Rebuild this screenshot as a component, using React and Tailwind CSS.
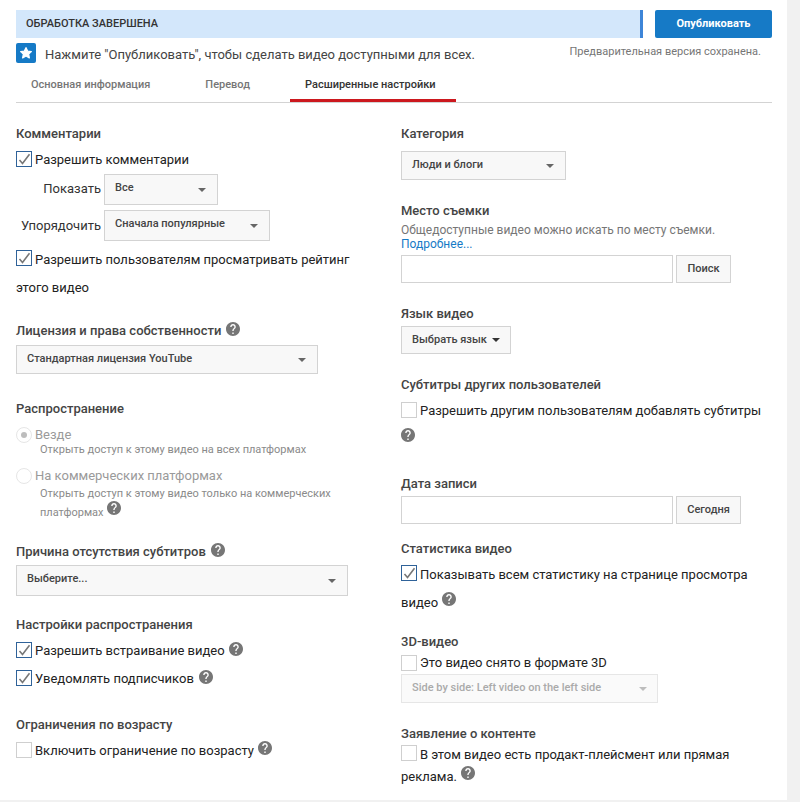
import React from "react";

function Help({ className = "" }) {
  return (
    <svg viewBox="2 2 20 20" className={"inline-block w-[14px] h-[14px] shrink-0 " + className}>
      <path fill="#767676" d="M12 2C6.48 2 2 6.48 2 12s4.48 10 10 10 10-4.48 10-10S17.52 2 12 2zm1 17h-2v-2h2v2zm2.07-7.75l-.9.92C13.45 12.9 13 13.5 13 15h-2v-.5c0-1.1.45-2.1 1.17-2.83l1.24-1.26c.37-.36.59-.86.59-1.41 0-1.1-.9-2-2-2s-2 .9-2 2H8c0-2.21 1.79-4 4-4s4 1.79 4 4c0 .88-.36 1.68-.93 2.25z" />
    </svg>
  );
}

function Box({ checked, className = "" }) {
  return (
    <span className={"inline-block align-[-2px] w-[16px] h-[16px] border bg-white relative shrink-0 mr-[3px] " + (checked ? "border-[#2f6299] " : "border-[#cfcfcf] ") + className}>
      {checked && (
        <svg viewBox="0 0 16 16" className="absolute -left-[1px] -top-[1px] w-[16px] h-[16px]">
          <path d="M3.5 9 L6.5 12.5 L13.5 3.2" fill="none" stroke="#777777" strokeWidth="1.6" />
        </svg>
      )}
    </span>
  );
}

function Arrow({ light, dark }) {
  return <span className={"w-0 h-0 border-l-[4px] border-r-[4px] border-t-[4px] border-l-transparent border-r-transparent " + (light ? "border-t-[#bdbdbd]" : dark ? "border-t-[#333333]" : "border-t-[#666666]")} />;
}

function Select({ children, className = "", shift = "" }) {
  return (
    <div className={"flex items-center justify-between border border-[#d3d3d3] bg-[#f8f8f8] text-[11px] font-medium text-[#444444] pl-[10px] pr-[11px] " + className}>
      <span className={shift}>{children}</span>
      <Arrow />
    </div>
  );
}

function Title({ children, className = "" }) {
  return <div className={"h-[20px] leading-[20px] text-[13px] font-medium text-[#444444] flex items-center " + className}>{children}</div>;
}

function Check({ checked, children, className = "", flat, after }) {
  return (
    <div className={"h-[20px] flex items-center text-[13px] text-[#222222] " + className}>
      <Box checked={checked} />
      <span className={flat ? "" : "pt-[2px]"}>{children}</span>
      {after}
    </div>
  );
}

function Radio({ on, children, className = "" }) {
  return (
    <div className={"h-[20px] flex items-center text-[13px] text-[#9a9a9a] " + className}>
      <span className="w-[16px] h-[16px] rounded-full border border-[#e6e6e6] flex items-center justify-center mr-[3px]">
        {on && <span className="w-[6px] h-[6px] rounded-full bg-[#bdbdbd]" />}
      </span>
      {children}
    </div>
  );
}

function Btn({ children, className = "" }) {
  return <div className={"flex items-center justify-center border border-[#d3d3d3] bg-[#f8f8f8] text-[11px] font-medium text-[#444444] " + className}>{children}</div>;
}

export default function App() {
  return (
    <div className="w-[800px] h-[802px] bg-[#f1f1f1] overflow-hidden" style={{ fontFamily: "Roboto, 'Noto Sans', sans-serif" }}>
      <div className="w-[787px] h-[800px] bg-white pl-[16px] pr-[15px] pt-[10px]">
        <div className="flex h-[28px]">
          <div className="w-[627px] bg-[#d3e7fb] border-r-[3px] border-[#3d85d8] flex items-center pl-[10px] text-[11px] font-medium text-[#333333]">ОБРАБОТКА ЗАВЕРШЕНА</div>
          <div className="ml-[12px] w-[117px] rounded-[2px] bg-[#167ac6] text-white text-[11px] font-bold flex items-center justify-center">Опубликовать</div>
        </div>
        <div className="flex h-[26px] items-center justify-between mt-[2px]">
          <div className="flex items-center text-[13px] text-[#444444]">
            <span className="w-[20px] h-[20px] rounded-[2px] bg-[#167ac6] flex items-center justify-center mr-[9px]">
              <svg viewBox="0 0 24 24" className="w-[16px] h-[16px]">
                <path fill="#ffffff" stroke="#ffffff" strokeWidth="2" strokeLinejoin="round" d="M12 4l2.4 5.2 5.6.7-4.1 3.8 1.1 5.6L12 16.5l-5 2.8 1.1-5.6L4 9.9l5.6-.7z" />
              </svg>
            </span>
            <span className="pt-[3px]">Нажмите "Опубликовать", чтобы сделать видео доступными для всех.</span>
          </div>
          <div className="text-[11px] text-[#767676] pr-[11px] -mt-[2px]">Предварительная версия сохранена.</div>
        </div>
        <div className="flex mt-0 border-b border-[#d3d3d3] h-[37px] text-[11px] font-medium">
          <div className="pl-[15px] pr-[15px] text-[#767676] pt-[11px]">Основная информация</div>
          <div className="ml-[25px] pl-[15px] pr-[15px] text-[#767676] pt-[11px]">Перевод</div>
          <div className="ml-[25px] pl-[15px] w-[166px] text-[#333333] pt-[11px] border-b-[3px] border-[#cc181e] h-[36px]">Расширенные настройки</div>
        </div>

        <div className="flex">
          <div className="w-[385px]">
            <Title className="mt-[21px]">Комментарии</Title>
            <Check checked className="mt-[5px]">Разрешить комментарии</Check>
            <div className="flex items-center mt-[5px] h-[31px] text-[13px] text-[#333333]">
              <span className="w-[85px] text-right pb-[2px]">Показать</span>
              <Select className="ml-[3px] w-[114px] h-[31px]" shift="pb-[2px]">Все</Select>
            </div>
            <div className="flex items-center mt-[5px] h-[31px] text-[13px] text-[#333333]">
              <span className="w-[85px] text-right">Упорядочить</span>
              <Select className="ml-[3px] w-[166px] h-[31px]" shift="pb-[2px]">Сначала популярные</Select>
            </div>
            <div className="mt-[5px] w-[360px] text-[13px] leading-[28px] text-[#222222]">
              <Box checked />Разрешить пользователям просматривать рейтинг этого видео
            </div>
            <Title className="mt-[19px]">Лицензия и права собственности <Help className="ml-[5px] -mt-[4px]" /></Title>
            <Select className="mt-[4px] w-[302px] h-[29px]">Стандартная лицензия YouTube</Select>
            <Title className="mt-[25px]">Распространение</Title>
            <Radio on className="mt-[6px]">Везде</Radio>
            <div className="ml-[24px] text-[11px] leading-[14px] text-[#8a8a8a] mt-[-2px]">Открыть доступ к этому видео на всех платформах</div>
            <Radio className="mt-[9px]">На коммерческих платформах</Radio>
            <div className="ml-[24px] w-[330px] text-[11px] leading-[19px] text-[#8a8a8a] mt-[-2px]">
              Открыть доступ к этому видео только на коммерческих платформах <Help className="ml-[1px] align-[-2px] relative -top-[3px]" />
            </div>
            <Title className="mt-[20px]">Причина отсутствия субтитров <Help className="ml-[5px] -mt-[4px]" /></Title>
            <Select className="mt-[3px] w-[332px] h-[31px]" shift="pb-[2px]">Выберите...</Select>
            <Title className="mt-[19px]">Настройки распространения</Title>
            <Check checked className="mt-[5px]" after={<Help className="ml-[4px] -mt-[3px]" />}>Разрешить встраивание видео</Check>
            <Check checked className="mt-[8px]" after={<Help className="ml-[5px] -mt-[3px]" />}>Уведомлять подписчиков</Check>
            <Title className="mt-[27px]">Ограничения по возрасту</Title>
            <Check className="mt-[5px]" after={<Help className="ml-[4px] -mt-[5px]" />}>Включить ограничение по возрасту</Check>
          </div>

          <div className="w-[371px]">
            <Title className="mt-[21px]">Категория</Title>
            <Select className="mt-[7px] w-[165px] h-[29px]">Люди и блоги</Select>
            <Title className="mt-[21px]">Место съемки</Title>
            <div className="text-[12px] leading-[14px] text-[#767676] mt-[2px]">Общедоступные видео можно искать по месту съемки.</div>
            <div className="text-[12px] leading-[14px] text-[#167ac6]">Подробнее...</div>
            <div className="flex mt-[4px] h-[28px]">
              <div className="w-[272px] border border-[#d3d3d3] bg-white" />
              <Btn className="ml-[3px] w-[55px]">Поиск</Btn>
            </div>
            <Title className="mt-[21px]">Язык видео</Title>
            <Btn className="mt-[2px] w-[110px] h-[28px] gap-[5px]">Выбрать язык <Arrow dark /></Btn>
            <Title className="mt-[21px]">Субтитры других пользователей</Title>
            <Check className="mt-[5px]">Разрешить другим пользователям добавлять субтитры</Check>
            <div className="h-[14px] mt-[8px] flex"><Help /></div>
            <Title className="mt-[32px]">Дата записи</Title>
            <div className="flex mt-[2px] h-[28px]">
              <div className="w-[272px] border border-[#d3d3d3] bg-white" />
              <Btn className="ml-[3px] w-[65px]">Сегодня</Btn>
            </div>
            <Title className="mt-[15px]">Статистика видео</Title>
            <div className="mt-[2px] w-[365px] text-[13px] leading-[28px] text-[#222222]">
              <Box checked />Показывать всем статистику на странице просмотра видео <Help className="ml-[1px] align-[-2px] relative -top-[3px]" />
            </div>
            <Title className="mt-[15px]">3D-видео</Title>
            <Check className="mt-[1px]" flat>Это видео снято в формате 3D</Check>
            <div className="mt-[1px] w-[257px] h-[29px] flex items-center justify-between border border-[#e6e6e6] bg-[#fafafa] pl-[10px] pr-[10px] text-[11px] font-medium text-[#aaaaaa]">
              <span>Side by side: Left video on the left side</span>
              <Arrow light />
            </div>
            <Title className="mt-[21px]">Заявление о контенте</Title>
            <div className="mt-0 w-[360px] text-[13px] leading-[22px] text-[#222222]">
              <Box />В этом видео есть продакт-плейсмент или прямая реклама. <Help className="ml-[1px] align-[-2px] relative -top-[3px]" />
            </div>
          </div>
        </div>
      </div>
    </div>
  );
}
